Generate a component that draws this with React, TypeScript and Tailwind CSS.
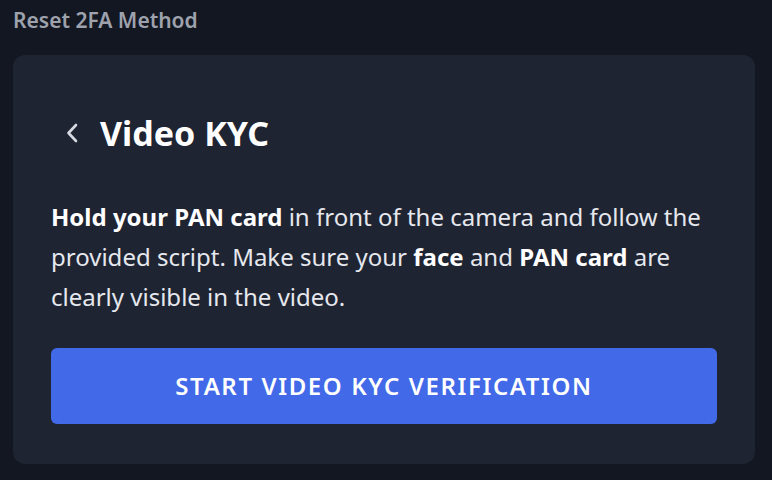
import React from "react";

export default function App() {
  return (
    <div
      className="w-[772px] h-[480px] bg-[#131722] pl-[13px] pr-[17px] pt-[6px] overflow-hidden"
      style={{ fontFamily: '"Noto Sans", "Open Sans", sans-serif' }}
    >
      <div className="text-[21px] leading-[28px] font-semibold text-[#9ea2ad]">Reset 2FA Method</div>
      <div className="mt-[21px] h-[409px] rounded-[12px] bg-[#1f2433] px-[38px] pt-[58px]">
        <div className="flex items-center h-[40px]">
          <svg width="14" height="20" viewBox="0 0 14 20" className="ml-[14px]" fill="none">
            <path d="M11 2 L3.5 10 L11 18" stroke="#d6d9e0" strokeWidth="2.6" strokeLinecap="round" strokeLinejoin="round" />
          </svg>
          <h1 className="ml-[21px] text-[34px] font-bold text-white leading-[40px]">Video KYC</h1>
        </div>
        <p className="mt-[44px] text-[24px] leading-[40px] text-[#e6e8ee]">
          <b className="font-bold text-white">Hold your PAN card</b> in front of the camera and follow the provided script. Make sure your{" "}
          <b className="font-bold text-white">face</b> and <b className="font-bold text-white">PAN card</b> are clearly visible in the video.
        </p>
        <button className="mt-[31px] w-full h-[76px] rounded-[6px] bg-[#4169e8] text-white text-[24px] font-semibold tracking-[1.6px] leading-none">
          START VIDEO KYC VERIFICATION
        </button>
      </div>
    </div>
  );
}
